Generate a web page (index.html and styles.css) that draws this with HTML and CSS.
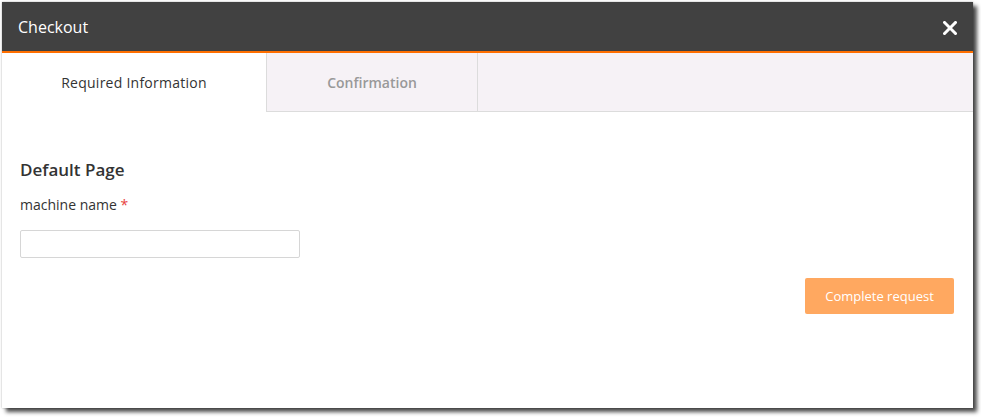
FILE: index.html
```html
<!DOCTYPE html>
<html>
<head>
<meta charset="utf-8">
<link rel="stylesheet" href="styles.css">
</head>
<body>
<div class="dialog">
  <div class="header">
    <span class="title">Checkout</span>
    <span class="close" aria-label="close">
      <svg width="14" height="14" viewBox="0 0 14 14"><path d="M1.5 1.5 L12.5 12.5 M12.5 1.5 L1.5 12.5" stroke="#fff" stroke-width="3" stroke-linecap="square"/></svg>
    </span>
  </div>
  <div class="tabs">
    <div class="tab active">Required Information</div>
    <div class="tab inactive">Confirmation</div>
    <div class="tab-fill"></div>
  </div>
  <div class="content">
    <h2 class="section-title">Default Page</h2>
    <label class="field-label">machine name <span class="req">*</span></label>
    <input class="field-input" type="text">
    <div class="actions">
      <button class="btn">Complete request</button>
    </div>
  </div>
</div>
</body>
</html>
```
FILE: styles.css
```css
html, body {
  margin: 0;
  padding: 0;
  background: #ffffff;
}
body {
  font-family: "Open Sans", "Noto Sans", sans-serif;
  padding: 2px 0 9px 2px;
}
.dialog {
  width: 971px;
  height: 406px;
  background: #fff;
  box-shadow: 0 0 2px rgba(0,0,0,0.3), 4px 4px 4px rgba(0,0,0,0.7);
  display: flex;
  flex-direction: column;
}
.header {
  height: 49px;
  flex: none;
  background: #414141;
  border-bottom: 2px solid #ff6f00;
  display: flex;
  align-items: center;
  justify-content: space-between;
  padding: 0 16px 0 16px;
}
.title {
  color: #fff;
  font-size: 16px;
  margin-top: 1px;
}
.close {
  display: flex;
  width: 14px;
  height: 14px;
  margin-top: 3px;
}
.tabs {
  display: flex;
  height: 59px;
  flex: none;
}
.tab {
  display: flex;
  align-items: center;
  justify-content: center;
  font-size: 14px;
}
.tab.active {
  width: 264px;
  color: #333;
  background: #fff;
  letter-spacing: 0.25px;
}
.tab.inactive {
  width: 210px;
  color: #999;
  font-weight: 600;
  background: #f6f2f6;
  border-left: 1px solid #dcdcdc;
  border-right: 1px solid #dcdcdc;
  border-bottom: 1px solid #dcdcdc;
}
.tab-fill {
  flex: 1;
  background: #f6f2f6;
  border-bottom: 1px solid #dcdcdc;
}
.content {
  padding: 0 19px 0 18px;
  display: flex;
  flex-direction: column;
}
.section-title {
  margin: 46px 0 0 0;
  font-size: 17px;
  font-weight: 600;
  color: #333;
  line-height: 24px;
}
.field-label {
  margin-top: 13px;
  font-size: 14px;
  color: #333;
  line-height: 20px;
}
.req {
  color: #e8413d;
}
.field-input {
  margin-top: 15px;
  width: 280px;
  height: 28px;
  box-sizing: border-box;
  border: 1px solid #d6d6d6;
  border-radius: 2px;
  padding: 0 6px;
  font-family: inherit;
}
.actions {
  display: flex;
  justify-content: flex-end;
  margin-top: 20px;
}
.btn {
  width: 149px;
  height: 36px;
  background: #ffa860;
  color: #fff;
  border: none;
  border-radius: 2px;
  font-family: inherit;
  font-size: 13px;
}
```
